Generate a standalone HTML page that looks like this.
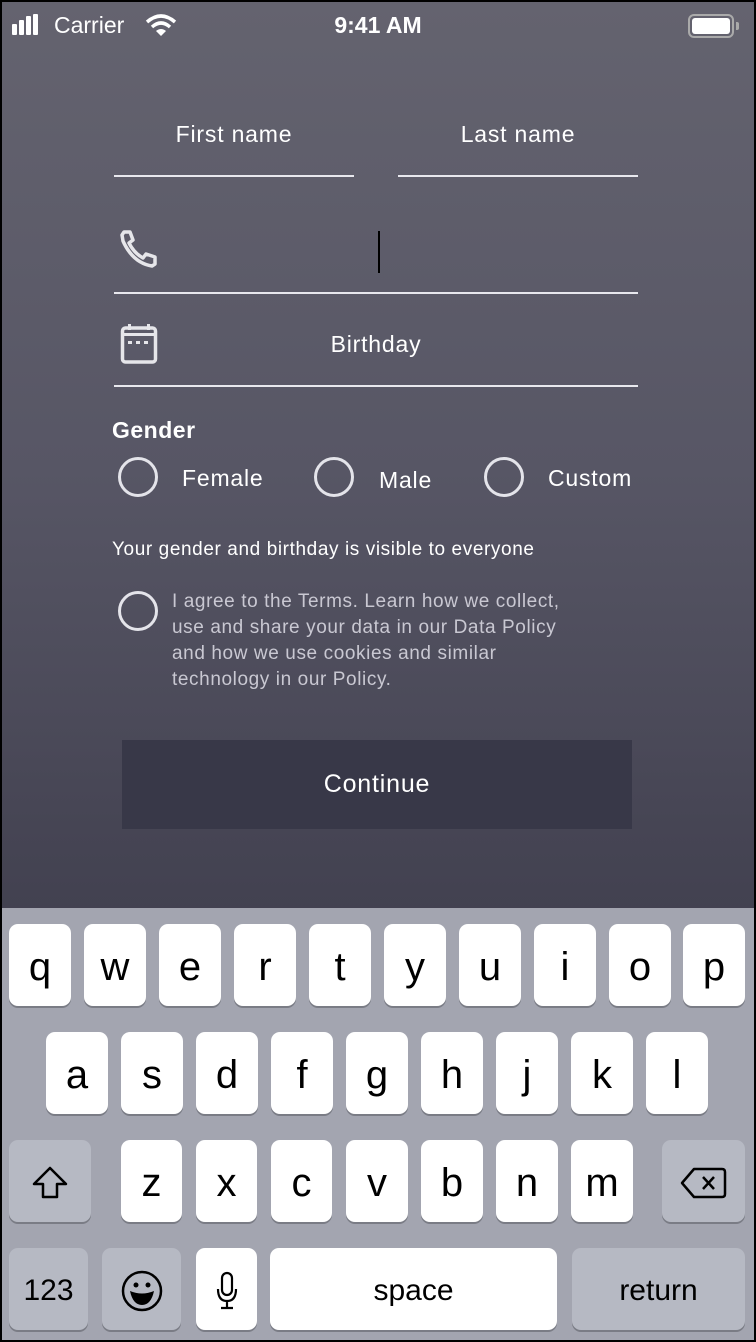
<!DOCTYPE html>
<html><head><meta charset="utf-8"><style>
*{margin:0;padding:0;box-sizing:border-box}
body{width:756px;height:1342px;background:#000;position:relative;overflow:hidden;font-family:"Liberation Sans",sans-serif}
#scr{position:absolute;left:2px;top:2px;width:752px;height:1338px;background:linear-gradient(180deg,#64636f 0%,#575665 35%,#424150 68%);overflow:hidden}
.a{position:absolute}
.t{color:#fff;font-size:23px;letter-spacing:.8px}
.line{position:absolute;height:1.5px;background:#e8e8ee}
.rad{position:absolute;width:40px;height:40px;border:3px solid #e4e4ea;border-radius:50%}
#kb{position:absolute;left:0;top:906px;width:752px;height:432px;background:#a3a5b0}
.k{position:absolute;background:#fff;border-radius:9px;box-shadow:0 2px 0 #7a7c85;height:82px;display:flex;align-items:center;justify-content:center;font-size:40px;color:#000;padding-top:4px}
.g{background:#b6b9c3}
</style></head><body><div id="scr">
<div class="a" style="left:10px;top:22px;width:5px;height:11px;background:#fff;border-radius:1px"></div>
<div class="a" style="left:17px;top:18px;width:5px;height:15px;background:#fff;border-radius:1px"></div>
<div class="a" style="left:24px;top:14px;width:5px;height:19px;background:#fff;border-radius:1px"></div>
<div class="a" style="left:31px;top:12px;width:5px;height:21px;background:#fff;border-radius:1px"></div>
<div class="a" style="left:52px;top:10px;color:#fff;font-size:23px">Carrier</div>
<svg class="a" style="left:142px;top:11px" width="34" height="24" viewBox="0 0 34 24"><path d="M3 9 Q17 -3 31 9" stroke="#fff" stroke-width="3.5" fill="none"/><path d="M8 14 Q17 6 26 14" stroke="#fff" stroke-width="3.5" fill="none"/><path d="M12 18 L17 23 L22 18 Q17 14 12 18Z" fill="#fff"/></svg>
<div class="a" style="left:0;width:752px;text-align:center;top:10px;color:#fff;font-size:23px;font-weight:bold">9:41 AM</div>
<div class="a" style="left:686px;top:12px;width:46px;height:24px;border:2px solid #aaa;border-radius:6px;padding:2px"><div style="width:100%;height:100%;background:#fff;border-radius:3px"></div></div>
<div class="a" style="left:734px;top:20px;width:3px;height:8px;background:#aaa;border-radius:0 2px 2px 0"></div>
<div class="a t" style="left:112px;width:240px;text-align:center;top:119px">First name</div>
<div class="a t" style="left:396px;width:240px;text-align:center;top:119px">Last name</div>
<div class="line" style="left:112px;width:240px;top:173px"></div>
<div class="line" style="left:396px;width:240px;top:173px"></div>
<svg class="a" style="left:117px;top:227px" width="40" height="40" viewBox="0 0 40 40"><path d="M5 3 L11 3 L14 11 L10 14 Q15 24 24 29 L27 25 L36 28 L36 35 L33 37 Q14 34 4 12 L3 6Z" fill="none" stroke="#e6e6ea" stroke-width="3.5" stroke-linejoin="round"/></svg>
<div class="a" style="left:376px;top:229px;width:2px;height:42px;background:#000"></div>
<div class="line" style="left:112px;width:524px;top:290px"></div>
<svg class="a" style="left:118px;top:321px" width="40" height="42" viewBox="0 0 40 42"><rect x="2.5" y="5" width="33" height="34" rx="3" fill="none" stroke="#e6e6ea" stroke-width="3.5"/><rect x="2" y="10" width="34" height="3" fill="#e6e6ea"/><rect x="8" y="1" width="3" height="6" fill="#e6e6ea"/><rect x="27" y="1" width="3" height="6" fill="#e6e6ea"/><rect x="8" y="18" width="4" height="3" fill="#e6e6ea"/><rect x="16" y="18" width="4" height="3" fill="#e6e6ea"/><rect x="24" y="18" width="4" height="3" fill="#e6e6ea"/></svg>
<div class="a t" style="left:112px;width:524px;text-align:center;top:329px">Birthday</div>
<div class="line" style="left:112px;width:524px;top:383px"></div>
<div class="a" style="left:110px;top:415px;color:#fff;font-size:23px;font-weight:bold;letter-spacing:.5px">Gender</div>
<div class="rad" style="left:116px;top:455px"></div><div class="a t" style="left:180px;top:463px">Female</div>
<div class="rad" style="left:312px;top:455px"></div><div class="a t" style="left:377px;top:465px">Male</div>
<div class="rad" style="left:482px;top:455px"></div><div class="a t" style="left:546px;top:463px">Custom</div>
<div class="a" style="left:110px;top:537px;color:#fff;font-size:19px;letter-spacing:.6px">Your gender and birthday is visible to everyone</div>
<div class="rad" style="left:116px;top:589px"></div>
<div class="a" style="left:170px;top:587px;color:#c9c8d2;font-size:19px;line-height:26px;letter-spacing:.6px;white-space:nowrap">I agree to the Terms. Learn how we collect,<br>use and share your data in our Data Policy<br>and how we use cookies and similar<br>technology in our Policy.</div>
<div class="a" style="left:120px;top:738px;width:510px;height:89px;background:#383848;color:#fff;font-size:25px;display:flex;align-items:center;justify-content:center;letter-spacing:.8px">Continue</div>
<div id="kb">
<div class="k" style="left:7px;top:16px;width:62px">q</div>
<div class="k" style="left:82px;top:16px;width:62px">w</div>
<div class="k" style="left:157px;top:16px;width:62px">e</div>
<div class="k" style="left:232px;top:16px;width:62px">r</div>
<div class="k" style="left:307px;top:16px;width:62px">t</div>
<div class="k" style="left:382px;top:16px;width:62px">y</div>
<div class="k" style="left:457px;top:16px;width:62px">u</div>
<div class="k" style="left:532px;top:16px;width:62px">i</div>
<div class="k" style="left:607px;top:16px;width:62px">o</div>
<div class="k" style="left:681px;top:16px;width:62px">p</div>
<div class="k" style="left:44px;top:124px;width:62px">a</div>
<div class="k" style="left:119px;top:124px;width:62px">s</div>
<div class="k" style="left:194px;top:124px;width:62px">d</div>
<div class="k" style="left:269px;top:124px;width:62px">f</div>
<div class="k" style="left:344px;top:124px;width:62px">g</div>
<div class="k" style="left:419px;top:124px;width:62px">h</div>
<div class="k" style="left:494px;top:124px;width:62px">j</div>
<div class="k" style="left:569px;top:124px;width:62px">k</div>
<div class="k" style="left:644px;top:124px;width:62px">l</div>
<div class="k g" style="left:7px;top:232px;width:82px"><svg width="40" height="36" viewBox="0 0 40 36"><path d="M20 3 L36 19 L27 19 L27 32 L13 32 L13 19 L4 19Z" fill="none" stroke="#000" stroke-width="2.5" stroke-linejoin="round"/></svg></div>
<div class="k" style="left:119px;top:232px;width:61px">z</div>
<div class="k" style="left:194px;top:232px;width:61px">x</div>
<div class="k" style="left:269px;top:232px;width:61px">c</div>
<div class="k" style="left:344px;top:232px;width:62px">v</div>
<div class="k" style="left:419px;top:232px;width:62px">b</div>
<div class="k" style="left:494px;top:232px;width:62px">n</div>
<div class="k" style="left:569px;top:232px;width:62px">m</div>
<div class="k g" style="left:660px;top:232px;width:83px"><svg width="48" height="34" viewBox="0 0 48 34"><path d="M14 3 L42 3 Q45 3 45 6 L45 28 Q45 31 42 31 L14 31 L2 17Z" fill="none" stroke="#000" stroke-width="2.5" stroke-linejoin="round"/><path d="M23 11 L34 23 M34 11 L23 23" stroke="#000" stroke-width="2.5"/></svg></div>
<div class="k g" style="left:7px;top:340px;width:79px;font-size:30px">123</div>
<div class="k g" style="left:100px;top:340px;width:79px"><svg width="42" height="42" viewBox="0 0 42 42"><circle cx="21" cy="21" r="19" fill="none" stroke="#000" stroke-width="2.5"/><circle cx="15" cy="15" r="2.5"/><circle cx="27" cy="15" r="2.5"/><path d="M9 21 Q21 26 33 21 Q30 35 21 35 Q12 35 9 21Z"/></svg></div>
<div class="k" style="left:194px;top:340px;width:61px"><svg width="24" height="40" viewBox="0 0 24 40"><rect x="7" y="2" width="10" height="22" rx="5" fill="none" stroke="#000" stroke-width="2.2"/><path d="M3 18 Q3 30 12 30 Q21 30 21 18 M12 30 L12 37 M6 37 L18 37" fill="none" stroke="#000" stroke-width="2.2"/></svg></div>
<div class="k" style="left:268px;top:340px;width:287px;font-size:30px">space</div>
<div class="k g" style="left:570px;top:340px;width:173px;font-size:30px">return</div>
</div>
</div></body></html>
